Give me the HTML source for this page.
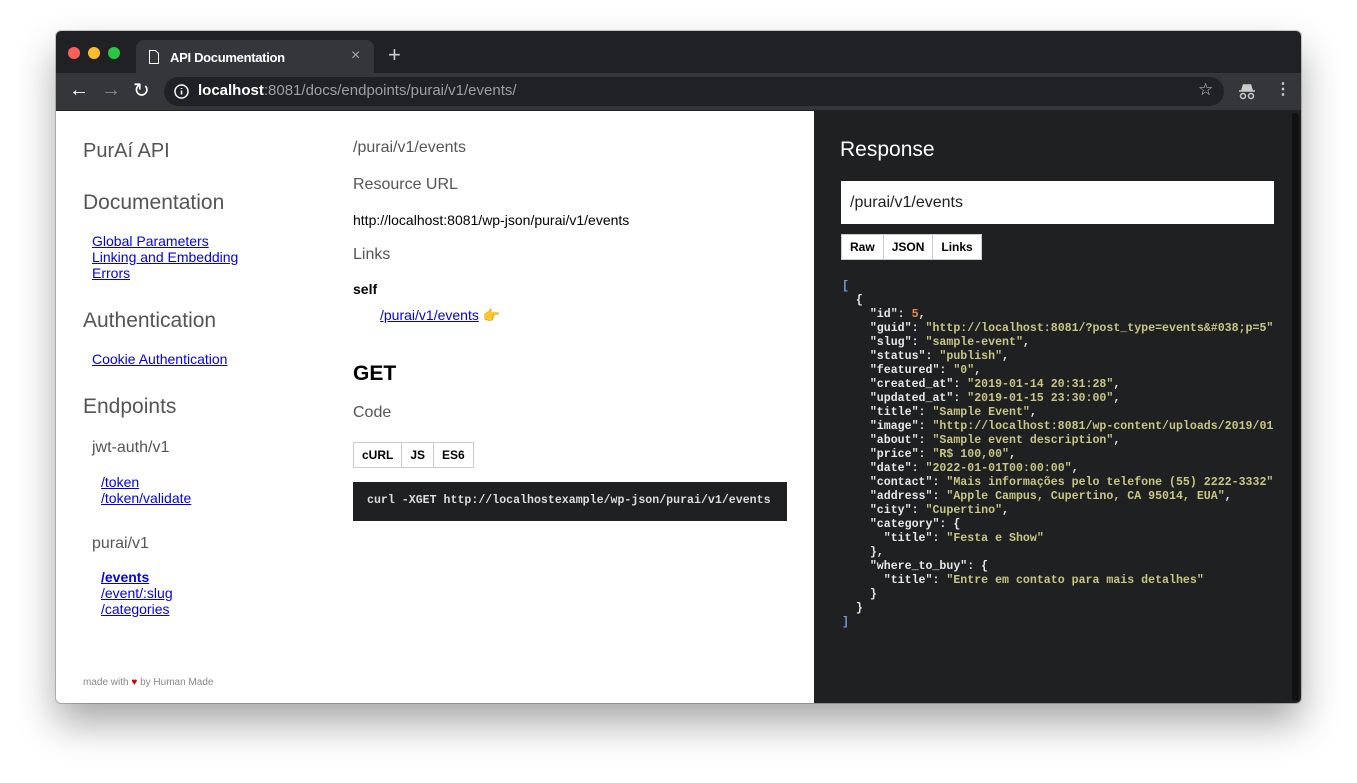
<!DOCTYPE html>
<html><head><meta charset="utf-8"><style>
*{margin:0;padding:0;box-sizing:border-box}
body{width:1357px;height:783px;background:#fff;position:relative;overflow:hidden;font-family:"Liberation Sans",sans-serif}
.win{position:absolute;left:56px;top:31px;width:1245px;height:672px;background:#fff;border-radius:5px;overflow:hidden;box-shadow:0 20px 40px rgba(0,0,0,.35),0 0 0 1px rgba(0,0,0,.2)}
.tb{position:absolute;left:0;top:0;width:100%;height:42px;background:#202124}
.tl{position:absolute;top:16px;width:12px;height:12px;border-radius:50%}
.tab{position:absolute;left:80px;top:9px;width:238px;height:34px;background:#35363a;border-radius:8px 8px 0 0;color:#fff;font-size:13px}
.tool{position:absolute;left:0;top:42px;width:100%;height:38px;background:#35363a;border-bottom:1px solid #222}
.url{position:absolute;left:108px;top:4px;width:1060px;height:29px;background:#202124;border-radius:15px;font-size:15px;color:#9aa0a6}
.a{position:absolute;white-space:nowrap}
a{color:#00e;text-decoration:underline}
.h{color:#555;font-weight:normal}
.dark{position:absolute;left:758px;top:80px;width:487px;height:592px;background:#1f2022}
pre{font-family:"Liberation Mono",monospace;font-weight:bold}
pre.a{white-space:pre}
.k{color:#e8e8e8}.s{color:#c9c584}.n{color:#e8864a}.b{color:#6a9fd6}
.btn{display:inline-block;border:1px solid #ccc;background:#fff;font-size:12px;font-weight:bold;padding:0 8px;height:26px;line-height:24px;margin-right:-1px}
</style></head><body>
<div class="win">
 <div class="tb">
  <div class="tl" style="left:12px;background:#fc5f57"></div>
  <div class="tl" style="left:32px;background:#fdbc2e"></div>
  <div class="tl" style="left:52px;background:#28c840"></div>
  <div class="tab">
   <svg class="a" style="left:12px;top:10px" width="12" height="14" viewBox="0 0 12 14"><path d="M1.5 .5h6l3 3v10h-9z" fill="none" stroke="#fff"/></svg>
   <span class="a" style="left:34px;top:10px;font-weight:bold;letter-spacing:-.3px">API Documentation</span>
   <span class="a" style="left:215px;top:7px;font-size:16px;color:#aaa">×</span>
  </div>
  <span class="a" style="left:332px;top:13px;color:#ccc;font-size:22px;line-height:22px">+</span>
 </div>
 <div class="tool">
  <span class="a" style="left:13px;top:6px;color:#fff;font-size:20px">←</span>
  <span class="a" style="left:45px;top:6px;color:#888;font-size:20px">→</span>
  <span class="a" style="left:77px;top:5px;color:#fff;font-size:20px">↻</span>
  <div class="url">
   <svg class="a" style="left:10px;top:7px" width="15" height="15" viewBox="0 0 15 15"><circle cx="7.5" cy="7.5" r="6.5" fill="none" stroke="#fff" stroke-width="1.5"/><path d="M7.5 6.5v4M7.5 4v1" stroke="#fff" stroke-width="1.6"/></svg>
   <span class="a" style="left:34px;top:5px"><b style="color:#fff">localhost</b>:8081/docs/endpoints/purai/v1/events/</span>
   <span class="a" style="left:1034px;top:3px;color:#ccc;font-size:17px">☆</span>
  </div>
  <svg class="a" style="left:1182px;top:11px" width="18" height="16" viewBox="0 0 18 16"><path d="M4 6l1.5-5h7L14 6z M1 7h16" fill="#ccc" stroke="#ccc" stroke-width="1.5"/><circle cx="5" cy="12" r="2.5" fill="none" stroke="#ccc" stroke-width="1.5"/><circle cx="13" cy="12" r="2.5" fill="none" stroke="#ccc" stroke-width="1.5"/></svg>
  <span class="a" style="left:1219px;top:6px;color:#ccc;font-size:16px;font-weight:bold">⋮</span>
 </div>
 <!-- content -->
 <div class="a h" style="left:27px;top:109px;font-size:20px">PurAí API</div>
 <div class="a h" style="left:27px;top:160px;font-size:21px">Documentation</div>
 <div class="a" style="left:36px;top:202px;font-size:14px;line-height:16px"><a>Global Parameters</a><br><a>Linking and Embedding</a><br><a>Errors</a></div>
 <div class="a h" style="left:27px;top:278px;font-size:21px">Authentication</div>
 <div class="a" style="left:36px;top:320px;font-size:14px"><a>Cookie Authentication</a></div>
 <div class="a h" style="left:27px;top:364px;font-size:21px">Endpoints</div>
 <div class="a h" style="left:36px;top:408px;font-size:16px">jwt-auth/v1</div>
 <div class="a" style="left:45px;top:443px;font-size:14px;line-height:16px"><a>/token</a><br><a>/token/validate</a></div>
 <div class="a h" style="left:36px;top:504px;font-size:16px">purai/v1</div>
 <div class="a" style="left:45px;top:538px;font-size:14px;line-height:16px"><a style="font-weight:bold">/events</a><br><a>/event/:slug</a><br><a>/categories</a></div>
 <div class="a" style="left:27px;top:646px;font-size:10px;color:#888">made with <span style="color:#c00">♥</span> by Human Made</div>

 <div class="a h" style="left:297px;top:108px;font-size:16px">/purai/v1/events</div>
 <div class="a h" style="left:297px;top:145px;font-size:16px">Resource URL</div>
 <div class="a" style="left:297px;top:181px;font-size:14px">http://localhost:8081/wp-json/purai/v1/events</div>
 <div class="a h" style="left:297px;top:215px;font-size:16px">Links</div>
 <div class="a" style="left:297px;top:250px;font-size:14px;font-weight:bold">self</div>
 <div class="a" style="left:324px;top:276px;font-size:14px"><a>/purai/v1/events</a> <span style="color:#f0b030">👉</span></div>
 <div class="a" style="left:297px;top:331px;font-size:21px;font-weight:bold">GET</div>
 <div class="a h" style="left:297px;top:373px;font-size:16px">Code</div>
 <div class="a" style="left:297px;top:411px"><span class="btn">cURL</span><span class="btn">JS</span><span class="btn">ES6</span></div>
 <div class="a" style="left:297px;top:451px;width:434px;height:39px;background:#1f2022"><pre class="a" style="left:14px;top:12px;font-size:11.6px;color:#ddd">curl -XGET http://localhostexample/wp-json/purai/v1/events</pre></div>

 <div class="dark">
  <div class="a" style="left:26px;top:27px;font-size:21px;color:#fff">Response</div>
  <div class="a" style="left:27px;top:70px;width:433px;height:43px;background:#fff;font-size:16px;padding:13px 9px;color:#222">/purai/v1/events</div>
  <div class="a" style="left:27px;top:123px"><span class="btn">Raw</span><span class="btn">JSON</span><span class="btn">Links</span></div>
  <pre class="a" style="left:28px;top:169px;width:433px;overflow:hidden;font-size:11.6px;line-height:14px;color:#e8e8e8"><span class="b">[</span>
  {
    "id": <span class="n">5</span>,
    "guid": <span class="s">"http://localhost:8081/?post_type=events&amp;#038;p=5"</span>
    "slug": <span class="s">"sample-event"</span>,
    "status": <span class="s">"publish"</span>,
    "featured": <span class="s">"0"</span>,
    "created_at": <span class="s">"2019-01-14 20:31:28"</span>,
    "updated_at": <span class="s">"2019-01-15 23:30:00"</span>,
    "title": <span class="s">"Sample Event"</span>,
    "image": <span class="s">"http://localhost:8081/wp-content/uploads/2019/01</span>
    "about": <span class="s">"Sample event description"</span>,
    "price": <span class="s">"R$ 100,00"</span>,
    "date": <span class="s">"2022-01-01T00:00:00"</span>,
    "contact": <span class="s">"Mais informações pelo telefone (55) 2222-3332"</span>
    "address": <span class="s">"Apple Campus, Cupertino, CA 95014, EUA"</span>,
    "city": <span class="s">"Cupertino"</span>,
    "category": {
      "title": <span class="s">"Festa e Show"</span>
    },
    "where_to_buy": {
      "title": <span class="s">"Entre em contato para mais detalhes"</span>
    }
  }
<span class="b">]</span></pre>
  <div class="a" style="left:478px;top:2px;width:7px;height:588px;background:#111;border-radius:3px"></div>
 </div>
</div>
</body></html>
